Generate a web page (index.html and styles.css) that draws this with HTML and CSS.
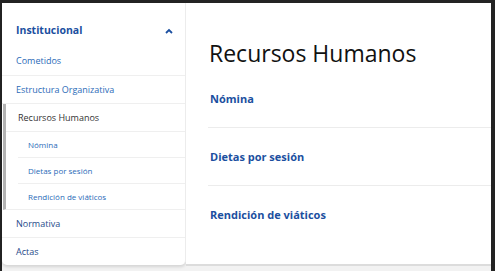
FILE: index.html
```html
<!doctype html>
<html lang="es">
<head>
    <meta charset="utf-8">
    <title>Recursos Humanos</title>
    <link rel="stylesheet" href="styles.css">
</head>
<body>
    <div class="frame">
        <div class="page">
            <nav class="sidebar">
                <div class="side-head">
                    <span>Institucional</span>
                    <svg class="chevron" width="8" height="6" viewBox="0 0 8 6"><path d="M1 5 L4 2 L7 5" fill="none" stroke="#1b4fa0" stroke-width="1.8"/></svg>
                </div>
                <a class="side-link">Cometidos</a>
                <a class="side-link">Estructura Organizativa</a>
                <div class="side-group">
                    <div class="group-title">Recursos Humanos</div>
                    <a class="sub-link">Nómina</a>
                    <a class="sub-link">Dietas por sesión</a>
                    <a class="sub-link">Rendición de viáticos</a>
                </div>
                <a class="side-link dark">Normativa</a>
                <a class="side-link dark last">Actas</a>
            </nav>
            <main class="content">
                <h1>Recursos Humanos</h1>
                <a class="doc-link">Nómina</a>
                <a class="doc-link">Dietas por sesión</a>
                <a class="doc-link last">Rendición de viáticos</a>
            </main>
        </div>
    </div>
</body>
</html>
```

FILE: styles.css
```css
body {
    margin: 0;
    background-color: #232323;
    font-family: "Open Sans", Arial, sans-serif;
}
.frame {
    padding: 3px 4px 0 2px;
    height: 268px;
}
.page {
    display: flex;
    height: 100%;
    background-color: #f2f2f2;
}

/* Sidebar */
.sidebar {
    width: 183px;
    height: 262px;
    background-color: #fff;
    border-right: 1px solid #ececec;
    border-radius: 0 0 5px 5px;
    box-shadow: 0 2px 3px rgba(0, 0, 0, 0.12);
    display: flex;
    flex-direction: column;
}
.side-head {
    display: flex;
    justify-content: space-between;
    align-items: center;
    height: 44px;
    padding: 10px 12px 0 14px;
    box-sizing: border-box;
    font-size: 10.5px;
    font-weight: 700;
    color: #1b4fa0;
}
.chevron {
    margin-top: 3px;
}
.side-link {
    display: flex;
    align-items: center;
    height: 28px;
    padding-left: 14px;
    font-size: 9px;
    color: #2b6bb8;
    border-bottom: 1px solid #efefef;
}
.side-link.dark {
    color: #274a8a;
    height: 27px;
}
.side-link.last {
    border-bottom: none;
}
.side-group {
    border-left: 3px solid #b3b3b3;
    margin-left: 1px;
    border-bottom: 1px solid #efefef;
}
.group-title {
    display: flex;
    align-items: center;
    height: 27px;
    padding-left: 12px;
    font-size: 9px;
    color: #333;
    border-bottom: 1px solid #efefef;
}
.sub-link {
    display: flex;
    align-items: center;
    height: 25px;
    margin-left: 12px;
    padding-left: 10px;
    font-size: 8px;
    color: #2b6bb8;
    border-bottom: 1px solid #efefef;
}
.sub-link:last-child {
    border-bottom: none;
}

/* Main content */
.content {
    flex: 1;
    height: 261px;
    background-color: #fff;
    border-bottom: 2px solid #dcdcdc;
    padding: 0 0 0 22px;
    display: flex;
    flex-direction: column;
}
h1 {
    margin: 0;
    padding-top: 35px;
    height: 31px;
    font-size: 23px;
    font-weight: 400;
    color: #111;
    line-height: 30px;
    padding-left: 1px;
}
.doc-link {
    display: flex;
    align-items: center;
    height: 57px;
    padding-left: 2px;
    font-size: 11px;
    font-weight: 700;
    color: #1b4fa0;
    border-bottom: 1px solid #ececec;
}
.doc-link:first-of-type {
    margin-top: 1px;
}
.doc-link.last {
    border-bottom: none;
}
```
